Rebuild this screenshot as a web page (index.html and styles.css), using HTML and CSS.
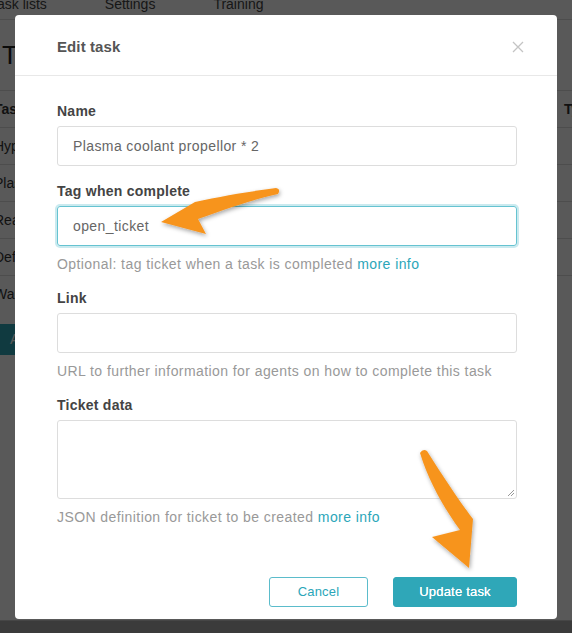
FILE: index.html
```html
<!DOCTYPE html>
<html>
<head>
<meta charset="utf-8">
<link rel="stylesheet" href="styles.css">
</head>
<body>
<div class="page">
  <nav class="nav">
    <span class="nav-link">Task lists</span>
    <span class="nav-link">Settings</span>
    <span class="nav-link">Training</span>
  </nav>
  <div class="content">
    <h1 class="heading">Tasks</h1>
    <table class="table">
      <tr><th class="left">Task</th><th class="right">Type</th></tr>
      <tr><td>Hyperdrive</td><td></td></tr>
      <tr><td>Plasma</td><td></td></tr>
      <tr><td>Reactor</td><td></td></tr>
      <tr><td>Deflector</td><td></td></tr>
      <tr><td>Warp</td><td></td></tr>
    </table>
    <div class="page-btn">Add task</div>
  </div>
  <div class="page-footer"></div>
</div>
<div class="backdrop"></div>
<div class="modal">
  <div class="modal-header">
    <h2 class="modal-title">Edit task</h2>
    <svg class="close" width="12" height="12" viewBox="0 0 12 12"><path d="M1 1L11 11M11 1L1 11" stroke="#c4c4c4" stroke-width="1.3" fill="none"/></svg>
  </div>
  <div class="modal-body">
    <div class="field">
      <label class="label">Name</label>
      <div class="input">Plasma coolant propellor * 2</div>
    </div>
    <div class="field">
      <label class="label">Tag when complete</label>
      <div class="input focus">open_ticket</div>
      <div class="help">Optional: tag ticket when a task is completed <span class="link">more info</span></div>
    </div>
    <div class="field">
      <label class="label">Link</label>
      <div class="input"></div>
      <div class="help">URL to further information for agents on how to complete this task</div>
    </div>
    <div class="field">
      <label class="label">Ticket data</label>
      <div class="textarea">
        <svg class="grip" width="8" height="8" viewBox="0 0 8 8"><path d="M7 1L1 7M7 4L4 7" stroke="#999" stroke-width="1" fill="none"/></svg>
      </div>
      <div class="help">JSON definition for ticket to be created <span class="link">more info</span></div>
    </div>
  </div>
  <div class="modal-footer">
    <div class="btn btn-outline">Cancel</div>
    <div class="btn btn-primary">Update task</div>
  </div>
</div>
<svg class="arrows" width="572" height="633" viewBox="0 0 572 633">
  <defs>
    <filter id="sh" x="-20%" y="-20%" width="140%" height="140%">
      <feDropShadow dx="1" dy="2" stdDeviation="2" flood-color="#000" flood-opacity="0.35"/>
    </filter>
  </defs>
  <path filter="url(#sh)" fill="#f7941e" d="M161,222 L195,202 C222,196 252,191 276,188 Q281,189 278,194 C255,199 228,208 198,219 L206,234 Z"/>
  <path filter="url(#sh)" fill="#f7941e" d="M420,453 Q423,448 427,451 C444,478 460,502 473,519 L469,568 L432,537 L460,530 C444,508 429,482 420,453 Z"/>
</svg>
</body>
</html>
```
FILE: styles.css
```css
* { box-sizing: border-box; }
html, body { margin: 0; padding: 0; }
body {
  width: 572px;
  height: 633px;
  overflow: hidden;
  position: relative;
  font-family: "Liberation Sans", Arial, sans-serif;
  background: #fff;
  color: #333;
}
.page { display: flex; flex-direction: column; height: 633px; }
.nav {
  display: flex;
  gap: 58px;
  height: 20px;
  margin-left: -10px;
  border-bottom: 1px solid #ddd;
  font-size: 14px;
  line-height: 8px;
  color: #444;
}
.nav-link { display: block; }
.content { flex: 1; padding: 20px 0 0; }
.heading { margin: 0 0 20px 2px; font-size: 26px; font-weight: normal; line-height: 30px; color: #222; }
.table { width: 630px; margin-left: -10px; border-collapse: collapse; table-layout: fixed; font-size: 14px; }
.table th, .table td { height: 37px; text-align: left; border-top: 1px solid #ddd; padding: 0 0 0 4px; color: #333; white-space: nowrap; overflow: hidden; }
.table th { font-weight: bold; }
.table .left { width: 570px; }
.table .right { padding-left: 4px; }
.page-btn {
  margin-top: 11px;
  width: 120px;
  height: 31px;
  background: #2fa7b8;
  color: #fff;
  font-size: 14px;
  line-height: 31px;
  padding-left: 10px;
}
.page-footer { height: 13px; background: #a8a8a8; border-top: 1px solid #c8c8c8; }
.backdrop { position: absolute; inset: 0; background: rgba(0,0,0,0.65); }
.modal {
  position: absolute;
  left: 15px;
  top: 15px;
  width: 542px;
  height: 604px;
  background: #fff;
  border-radius: 4px;
  display: flex;
  flex-direction: column;
}
.modal-header {
  height: 61px;
  border-bottom: 1px solid #e8e8e8;
  display: flex;
  align-items: center;
  justify-content: space-between;
  padding: 3px 33px 0 42px;
}
.modal-title { margin: 0; font-size: 15px; font-weight: bold; color: #555; letter-spacing: 0.1px; }
.close { display: block; margin-top: 0; }
.modal-body { padding: 25px 40px 0 42px; }
.field { margin-bottom: 15px; }
.label { display: block; font-size: 14px; font-weight: bold; line-height: 20px; color: #444; margin-bottom: 5px; letter-spacing: 0.25px; }
.input {
  height: 40px;
  border: 1px solid #ddd;
  border-radius: 3px;
  padding: 0 15px;
  font-size: 14px;
  line-height: 38px;
  color: #666;
  letter-spacing: 0.4px;
}
.input.focus { border-color: #66c3d1; box-shadow: 0 0 0 2px rgba(102,195,209,0.35); }
.textarea {
  height: 79px;
  border: 1px solid #ddd;
  border-radius: 3px;
  position: relative;
}
.grip { position: absolute; right: 1px; bottom: 1px; }
.help { margin-top: 8px; font-size: 14px; line-height: 20px; color: #999; margin-bottom: -1px; letter-spacing: 0.42px; }
.link { color: #2ba6b9; }
.modal-footer {
  margin-top: auto;
  display: flex;
  justify-content: flex-end;
  gap: 25px;
  padding: 0 40px 12px 0;
}
.btn {
  height: 30px;
  border-radius: 3px;
  font-size: 13px;
  line-height: 28px;
  text-align: center;
  letter-spacing: 0.2px;
}
.btn-outline { width: 99px; border: 1px solid #5bbccb; color: #2ba6b9; background: #fff; }
.btn-primary { width: 124px; border: 1px solid #2fa7b8; background: #2fa7b8; color: #fff; text-shadow: 0 0 0.4px #fff; }
.arrows { position: absolute; left: 0; top: 0; pointer-events: none; }
```
